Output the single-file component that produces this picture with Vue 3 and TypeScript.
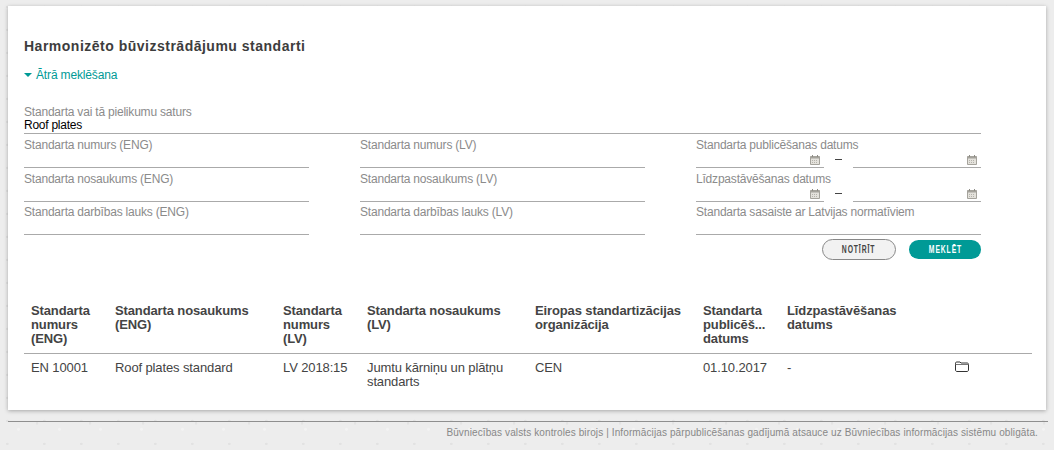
<template>
  <div class="page">
    <main class="card">
      <h1 class="title">Harmonizēto būvizstrādājumu standarti</h1>
      <div class="toggle"><span class="caret" />Ātrā meklēšana</div>

      <form class="search" @submit.prevent>
        <div class="field field--wide">
          <label class="field__label">Standarta vai tā pielikumu saturs</label>
          <div class="field__value">Roof plates</div>
        </div>

        <div class="grid">
          <div v-for="label in textFields" :key="label" class="field">
            <label class="field__label">{{ label }}</label>
            <div class="field__line" />
          </div>
          <div class="field field--dates dates-a">
            <label class="field__label">Standarta publicēšanas datums</label>
            <div class="dates">
              <div class="date"><CalIcon /></div>
              <span class="dash" />
              <div class="date"><CalIcon /></div>
            </div>
          </div>
          <div class="field field--dates dates-b">
            <label class="field__label">Līdzpastāvēšanas datums</label>
            <div class="dates">
              <div class="date"><CalIcon /></div>
              <span class="dash" />
              <div class="date"><CalIcon /></div>
            </div>
          </div>
          <div class="field dates-c">
            <label class="field__label">Standarta sasaiste ar Latvijas normatīviem</label>
            <div class="field__line" />
          </div>
        </div>

        <div class="actions">
          <button class="btn btn--ghost" type="button"><span>NOTĪRĪT</span></button>
          <button class="btn btn--primary" type="submit"><span>MEKLĒT</span></button>
        </div>
      </form>

      <div class="table">
        <div class="row row--head">
          <div v-for="(h, i) in headers" :key="i" class="cell" :class="`cell--${spans[i]}`">{{ h }}</div>
        </div>
        <div class="row">
          <div v-for="(c, i) in cells" :key="i" class="cell" :class="`cell--${spans[i]}`">{{ c }}</div>
          <div class="cell cell--1">
            <svg class="folder" width="14" height="11" viewBox="0 0 14 11" fill="none" stroke="#333" stroke-width="1">
              <path d="M0.5 9V2.2C0.5 1.5 1 1 1.7 1H5L6 2H12C12.9 2 13.5 2.5 13.5 3.2V9C13.5 9.8 12.9 10.5 12 10.5H2C1.1 10.5 0.5 9.8 0.5 9Z" />
              <path d="M0.5 3.5H13.5" stroke="#777" />
            </svg>
          </div>
        </div>
      </div>
    </main>

    <footer class="footer">
      Būvniecības valsts kontroles birojs | Informācijas pārpublicēšanas gadījumā atsauce uz Būvniecības informācijas sistēmu obligāta.
    </footer>
  </div>
</template>

<script setup lang="ts">
import { h } from 'vue';

const CalIcon = () =>
  h('svg', { class: 'cal', width: 10, height: 10, viewBox: '0 0 10 10' }, [
    h('path', { d: 'M0.5 1.5H9.5V9.5H0.5Z', fill: '#e4e2dc', stroke: '#a5a39c', 'stroke-width': 1 }),
    h('path', { d: 'M0.5 1.5H9.5V3.5H0.5Z', fill: '#a5a39c' }),
    h('path', { d: 'M2.5 0V2M7.5 0V2', stroke: '#8e8c85', 'stroke-width': 1 }),
    h('path', { d: 'M2 5.5H8M2 7.5H8', stroke: '#b5b3ac', 'stroke-width': 1, 'stroke-dasharray': '1 1' }),
  ]);

const textFields = [
  'Standarta numurs (ENG)',
  'Standarta numurs (LV)',
  'Standarta nosaukums (ENG)',
  'Standarta nosaukums (LV)',
  'Standarta darbības lauks (ENG)',
  'Standarta darbības lauks (LV)',
];

const spans = [1, 2, 1, 2, 2, 1, 2];

const headers = [
  'Standarta numurs (ENG)',
  'Standarta nosaukums (ENG)',
  'Standarta numurs (LV)',
  'Standarta nosaukums (LV)',
  'Eiropas standartizācijas organizācija',
  'Standarta publicēš... datums',
  'Līdzpastāvēšanas datums',
];

const cells = [
  'EN 10001',
  'Roof plates standard',
  'LV 2018:15',
  'Jumtu kārniņu un plātņu standarts',
  'CEN',
  '01.10.2017',
  '-',
];
</script>

<style>
html,
body {
  margin: 0;
  background: #ededed;
}
</style>

<style scoped>
.page {
  width: 1054px;
  height: 450px;
  overflow: hidden;
  padding-top: 6px;
  box-sizing: border-box;
  font-family: 'Liberation Sans', Arial, sans-serif;
  background-color: #ededed;
  /* faint paper speckle */
  background-image:
    radial-gradient(circle at 20% 30%, #e2e2e2 0, #e2e2e2 1px, transparent 1.5px),
    radial-gradient(circle at 70% 60%, #e4e4e4 0, #e4e4e4 1px, transparent 1.5px),
    radial-gradient(circle at 45% 85%, #f3f3f3 0, #f3f3f3 1px, transparent 2px);
  background-size: 37px 23px, 53px 29px, 41px 31px;
}

.card {
  width: 1038px;
  height: 404px;
  margin-left: 8px;
  padding: 32px 14px 0 16px;
  box-sizing: border-box;
  background: #fff;
  box-shadow: 0 1px 4px rgba(0, 0, 0, 0.3);
}

.title {
  margin: 0;
  font-size: 14px;
  line-height: 16px;
  font-weight: 700;
  letter-spacing: 0.5px;
  color: #3d3d3d;
}

.toggle {
  display: flex;
  align-items: center;
  margin-top: 13px;
  font-size: 12px;
  line-height: 16px;
  letter-spacing: -0.15px;
  color: #009a96;
}

.caret {
  width: 0;
  height: 0;
  margin-right: 4px;
  border-left: 4px solid transparent;
  border-right: 4px solid transparent;
  border-top: 4px solid #009a96;
}

.search {
  margin-top: 22px;
  width: 957px;
}

.field__label {
  display: block;
  font-size: 12px;
  line-height: 14px;
  letter-spacing: -0.2px;
  color: #8b8b8b;
}

.field--wide {
  border-bottom: 1px solid #aaa;
  height: 28px;
}

.field__value {
  margin-top: -1px;
  font-size: 12px;
  line-height: 14px;
  letter-spacing: -0.25px;
  color: #000;
}

.grid {
  display: grid;
  grid-template-columns: 285px 285px 285px;
  column-gap: 51px;
  grid-auto-rows: 33.5px;
  margin-top: 4px;
}

.dates-a {
  grid-column: 3;
  grid-row: 1;
}
.dates-b {
  grid-column: 3;
  grid-row: 2;
}
.dates-c {
  grid-column: 3;
  grid-row: 3;
}

.field__line {
  height: 15px;
  border-bottom: 1px solid #aaa;
}

.dates {
  display: flex;
  align-items: flex-end;
  height: 16px;
}

.date {
  display: flex;
  justify-content: flex-end;
  align-items: center;
  width: 128px;
  height: 15px;
  padding-right: 4px;
  box-sizing: border-box;
  border-bottom: 1px solid #aaa;
}

.dash {
  width: 7px;
  height: 1px;
  margin: 0 11px 8px 11px;
  background: #444;
}

.cal {
  display: block;
}

.actions {
  display: flex;
  justify-content: flex-end;
  align-items: center;
  gap: 13px;
  margin-top: 0;
}

.btn {
  padding: 0;
  border-radius: 11px;
  font-family: 'Liberation Sans', Arial, sans-serif;
  font-size: 10px;
  font-weight: 700;
  letter-spacing: 1.3px;
  cursor: pointer;
}

.btn span {
  display: inline-block;
  transform: scaleX(0.68);
}

.btn--ghost {
  width: 74px;
  height: 21px;
  border: 1px solid #888;
  background: #f2f2f2;
  color: #444;
}

.btn--primary {
  width: 72px;
  height: 19px;
  border: 0;
  background: #009a96;
  color: #fff;
}

.table {
  width: 1008px;
  margin-top: 44px;
}

.row {
  display: grid;
  grid-template-columns: repeat(12, 84px);
  font-size: 13px;
  line-height: 14px;
  letter-spacing: -0.12px;
  color: #444;
}

.row--head {
  font-weight: 700;
  height: 49px;
  border-bottom: 1px solid #aaa;
}

.row--head .cell {
  padding-top: 0;
}

.cell {
  padding: 7px 7px 0;
  box-sizing: border-box;
}

.cell--1 {
  grid-column: span 1;
}
.cell--2 {
  grid-column: span 2;
}

.folder {
  display: block;
  margin-top: 0;
}

.footer {
  width: 1040px;
  margin: 11px 0 0 8px;
  padding: 5px 10px 0 0;
  box-sizing: border-box;
  border-top: 1px solid #8f8f8f;
  text-align: right;
  font-size: 10px;
  line-height: 12px;
  letter-spacing: 0.115px;
  color: #888;
}
</style>
